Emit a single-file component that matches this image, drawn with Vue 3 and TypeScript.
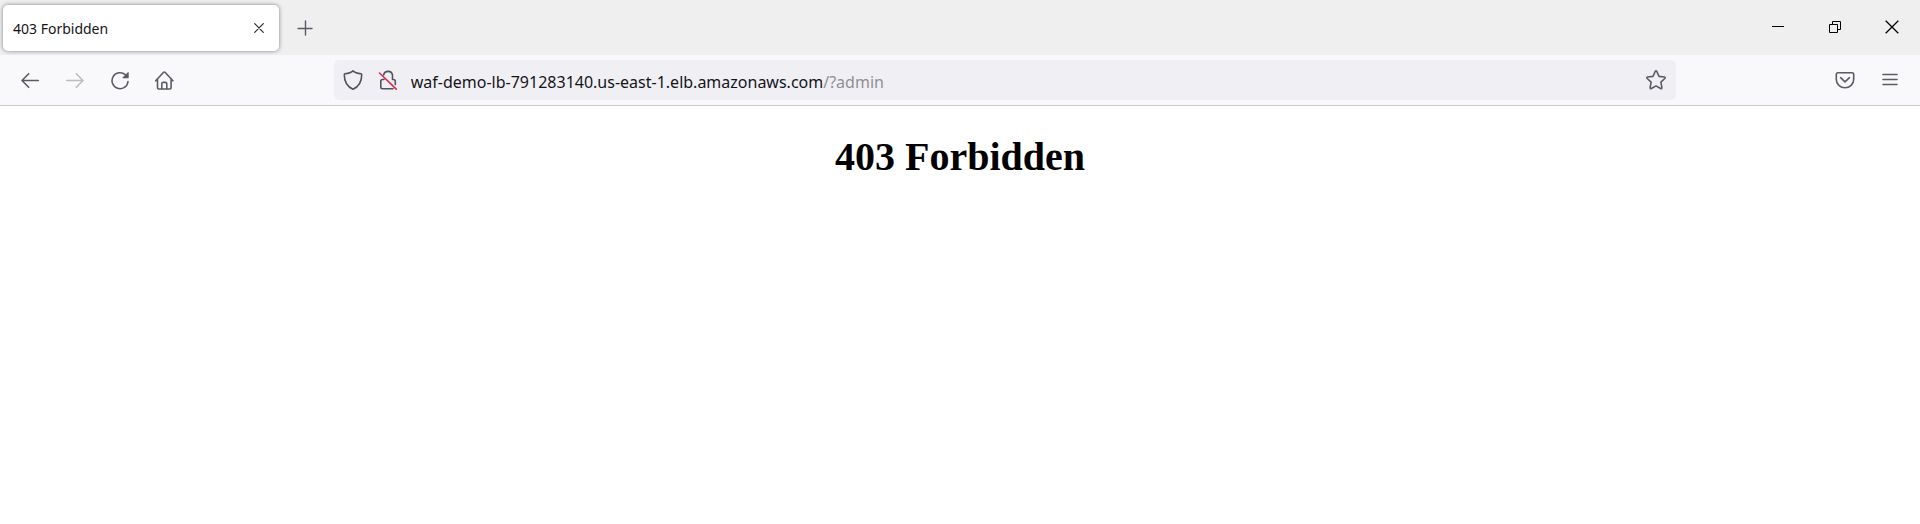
<script setup lang="ts">
import { computed, ref } from 'vue'

const title = '403 Forbidden'
const address = ref('waf-demo-lb-791283140.us-east-1.elb.amazonaws.com/?admin')

const slash = computed(() => {
  const at = address.value.indexOf('/')
  return at < 0 ? address.value.length : at
})
const host = computed(() => address.value.slice(0, slash.value))
const path = computed(() => address.value.slice(slash.value))
</script>

<template>
  <div class="browser">
    <header class="tab-strip">
      <div class="tab">
        <span class="tab-title">{{ title }}</span>
        <button class="tab-close" type="button" aria-label="Close tab">
          <svg width="10" height="10" viewBox="0 0 10 10"><path d="M.7.7l8.6 8.6M9.3.7L.7 9.3" /></svg>
        </button>
      </div>
      <button class="new-tab" type="button" aria-label="New tab">
        <svg width="16" height="16" viewBox="0 0 16 16"><path d="M8.500 1v14M1 8.500h14" /></svg>
      </button>
      <div class="window-controls">
        <button type="button" aria-label="Minimize">
          <svg width="12" height="12" viewBox="0 0 12 12"><path d="M0 5.500h12" /></svg>
        </button>
        <button type="button" aria-label="Restore">
          <svg width="12" height="12" viewBox="0 0 12 12"><path d="M.5 3.500h8v8h-8zM3.500 3.500v-3h8v8h-3" /></svg>
        </button>
        <button type="button" aria-label="Close window">
          <svg class="close-icon" width="14" height="14" viewBox="0 0 14 14"><path d="M.7.7l12.600 12.600M13.300.7L.7 13.300" /></svg>
        </button>
      </div>
    </header>

    <nav class="toolbar" aria-label="Navigation">
      <div class="group">
        <button type="button" aria-label="Back">
          <svg width="20" height="20" viewBox="0 0 20 20"><path d="M18.300 10.500H2M8.700 3.700L2 10.500l6.700 6.800" /></svg>
        </button>
        <button type="button" aria-label="Forward" disabled>
          <svg width="20" height="20" viewBox="0 0 20 20"><path d="M1.700 10.500H18M11.300 3.700L18 10.500l-6.700 6.800" /></svg>
        </button>
        <button type="button" aria-label="Reload">
          <svg width="20" height="20" viewBox="0 0 20 20">
            <path d="M15.500 4.900A8 8 0 1 0 18 11.500" />
            <path class="solid" d="M18.700 2.500v5.200q0 .6-.6.6h-5.200q-.9 0-.3-.7l5.300-5.300q.8-.6.8.2z" />
          </svg>
        </button>
        <button type="button" aria-label="Home">
          <svg width="20" height="20" viewBox="0 0 20 20">
            <path d="M.7 10.800L8.600 2.300q.7-.7 1.400 0l7.900 8.500M2.500 9.100v8.700q0 1.200 1.200 1.200h11.200q1.200 0 1.200-1.200V9.100" />
            <path d="M6.800 18.800v-5q0-1.400 1.400-1.400h2.200q1.400 0 1.400 1.400v5" />
          </svg>
        </button>
      </div>

      <div class="spring"></div>

      <div class="address-bar">
        <button class="identity" type="button" aria-label="Tracking protection">
          <svg width="20" height="20" viewBox="0 0 20 20">
            <path d="M10 .9c1.300 1.300 4.500 2.500 8 2.900 .5.100.7.400.7.900C18.700 12 15.500 16.800 10 19.200 4.500 16.800 1.300 12 1.300 4.700c0-.5.200-.8.700-.9C5.500 3.400 8.700 2.200 10 .9z" />
          </svg>
        </button>
        <button class="identity" type="button" aria-label="Connection is not secure">
          <svg width="20" height="20" viewBox="0 0 20 20">
            <path d="M5.700 5V4.800A4.500 4.500 0 0 1 14.500 5v4.500h.8q2 0 2 2v3M6 9.500H4.500q-1.700 0-1.700 1.700v5.800q0 1.700 1.700 1.700h10.500" />
            <path class="strike" d="M1.500 3L18.300 19.200" />
          </svg>
        </button>
        <div class="address">
          <input v-model="address" type="text" aria-label="Address" spellcheck="false">
          <span class="address-text" aria-hidden="true">{{ host }}<span class="path">{{ path }}</span></span>
        </div>
        <button class="bookmark" type="button" aria-label="Bookmark this page">
          <svg width="20" height="20" viewBox="0 0 20 20">
            <path d="M9.200 1.500q.8-1.400 1.600 0l2.200 4.900 5.300.6q1.500.3.500 1.500l-3.900 3.700 1 5.400q.1 1.500-1.300.9L10 15.900l-4.600 2.600q-1.400.6-1.300-.9l1-5.400-3.900-3.700Q.2 7.300 1.700 7L7 6.400z" />
          </svg>
        </button>
      </div>

      <div class="spring"></div>

      <div class="group">
        <button type="button" aria-label="Save to Pocket">
          <svg width="20" height="20" viewBox="0 0 20 20">
            <path d="M3 2.800h14q1.700 0 1.700 1.700v5a8.700 8.200 0 0 1-17.400 0v-5q0-1.700 1.700-1.700z" />
            <path d="M5.600 7.700L10 11.800l4.400-4.100" />
          </svg>
        </button>
        <button type="button" aria-label="Open application menu">
          <svg width="20" height="20" viewBox="0 0 20 20"><path d="M3 4.500h14M3 9.500h14M3 14.500h14" /></svg>
        </button>
      </div>
    </nav>

    <main>
      <h1>{{ title }}</h1>
    </main>
  </div>
</template>

<style>
body {
  margin: 0;
  background: #fff;
}
</style>

<style scoped>
.browser {
  font-family: "Noto Sans", "Open Sans", sans-serif;
  color: #15141a;
}

button {
  display: flex;
  align-items: center;
  justify-content: center;
  flex: none;
  padding: 0;
  border: 0;
  border-radius: 5px;
  background: none;
  color: #5b5b66;
}

button:disabled {
  color: #bdbdc1;
}

svg {
  display: block;
  fill: none;
  stroke: currentColor;
  stroke-width: 1.6;
  stroke-linecap: round;
  stroke-linejoin: round;
}

.solid {
  fill: currentColor;
  stroke: none;
}

.tab-strip {
  display: flex;
  align-items: center;
  height: 55px;
  background: #efefef;
}

.tab {
  display: flex;
  align-items: center;
  justify-content: space-between;
  box-sizing: border-box;
  width: 276px;
  height: 46px;
  margin-left: 3px;
  padding: 0 5px 0 10px;
  border-radius: 5px;
  background: #fff;
  box-shadow: 0 0 4px #80808e;
}

.tab-title {
  padding-top: 2px;
  font-size: 14px;
  line-height: 20px;
}

.tab-close {
  width: 30px;
  height: 30px;
  color: #2b2a33;
}

.tab-close svg {
  stroke-width: 1.2;
}

.new-tab {
  width: 40px;
  height: 40px;
  margin-left: 6px;
}

.new-tab svg {
  stroke-width: 1.4;
}

.window-controls {
  display: flex;
  align-self: flex-start;
  margin-left: auto;
}

.window-controls button {
  width: 57px;
  height: 54px;
  border-radius: 0;
  color: #000;
}

.window-controls svg {
  stroke-width: 1;
  stroke-linecap: butt;
  stroke-linejoin: miter;
}

.window-controls .close-icon {
  stroke-width: 1.3;
}

.toolbar {
  display: flex;
  align-items: center;
  height: 50px;
  padding: 0 10px;
  border-bottom: 1px solid #ccc;
  background: #f9f9fb;
}

.group {
  display: flex;
  flex: none;
  gap: 5px;
}

.group button {
  width: 40px;
  height: 40px;
}

.spring {
  flex: 1;
}

.address-bar {
  display: flex;
  align-items: center;
  flex: 9;
  box-sizing: border-box;
  min-width: 0;
  height: 40px;
  padding: 0 2px;
  border-radius: 5px;
  background: #f0f0f4;
}

.identity {
  width: 35px;
  height: 36px;
  color: #52525e;
}

.address {
  position: relative;
  flex: 1;
  min-width: 0;
  margin-left: 5px;
  padding-top: 3px;
  font-size: 16px;
  line-height: 24px;
}

.address input {
  display: block;
  box-sizing: border-box;
  width: 100%;
  height: 24px;
  padding: 0;
  border: 0;
  outline: 0;
  background: none;
  color: transparent;
  caret-color: #15141a;
  font: inherit;
}

.address-text {
  position: absolute;
  inset: 3px 0 0;
  overflow: hidden;
  white-space: nowrap;
  pointer-events: none;
}

.path {
  color: #8f8f94;
}

.identity .strike {
  stroke: #e22850;
}

.bookmark {
  width: 36px;
  height: 36px;
}

h1 {
  margin: 28px 0;
  color: #000;
  font-family: "Liberation Serif", "Times New Roman", serif;
  font-size: 40px;
  line-height: 46px;
  text-align: center;
}
</style>
